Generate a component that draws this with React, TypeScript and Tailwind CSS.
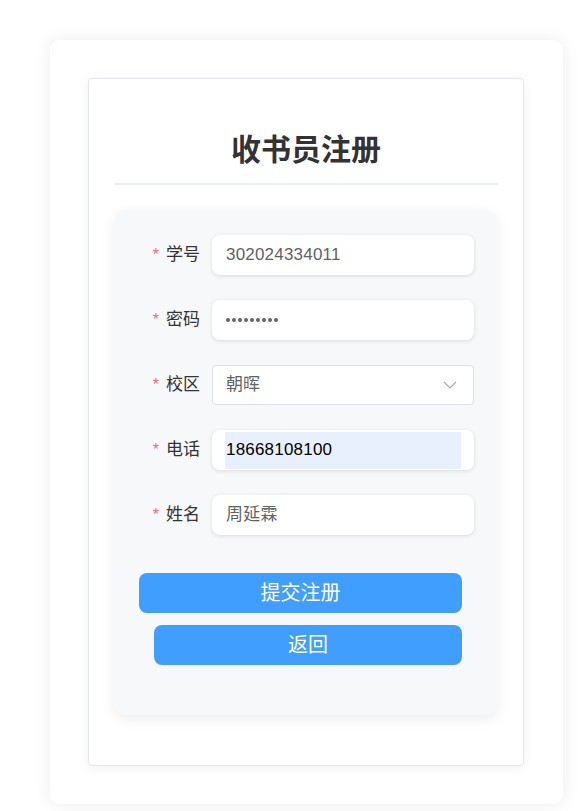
import React from "react";

const font = { fontFamily: '"Liberation Sans", "Noto Sans CJK SC", sans-serif' };

function Label({ text }: { text: string }) {
  return (
    <div className="w-[61px] shrink-0 flex items-center justify-end text-[17px] text-[#333333]">
      <span className="text-[#f56c6c] mr-[7px] text-[16px]">*</span>
      <span>{text}</span>
    </div>
  );
}

function Row({ label, children }: { label: string; children: React.ReactNode }) {
  return (
    <div className="flex items-center h-[40px] pl-[25px]">
      <Label text={label} />
      <div className="ml-[12px] w-[262px] h-[40px]">{children}</div>
    </div>
  );
}

function TextBox({ value, color = "#606266" }: { value: string; color?: string }) {
  return (
    <div className="w-full h-full bg-white rounded-[8px] shadow-[0_1px_4px_rgba(0,0,0,0.12)] flex items-center px-[14px] text-[17px] tracking-[0.2px]" style={{ color }}>
      {value}
    </div>
  );
}

export default function App() {
  const dots = [0, 1, 2, 3, 4, 5, 6, 7, 8];
  return (
    <div className="min-h-[811px] bg-white pt-[40px] pl-[50px]" style={font}>
      <div className="w-[513px] h-[764px] bg-white rounded-[10px] shadow-[0_0_18px_rgba(0,0,0,0.08)] pt-[38px] pl-[38px]">
        <div className="w-[436px] h-[688px] bg-white border border-[#e4e7ed] rounded-[4px] shadow-[0_2px_12px_rgba(0,0,0,0.06)] px-[25px] pt-[50px]">
          <h1 className="text-center text-[30px] leading-[42px] font-bold text-[#333333]">收书员注册</h1>
          <div className="mt-[12px] h-[2px] bg-[#ebeef5]" />
          <div className="mt-[25px] h-[505px] bg-[#f7f8fa] rounded-[12px] shadow-[0_4px_14px_rgba(0,0,0,0.07)] pt-[25px] flex flex-col">
            <div className="flex flex-col gap-[25px]">
              <Row label="学号">
                <TextBox value="302024334011" />
              </Row>
              <Row label="密码">
                <div className="w-full h-full bg-white rounded-[8px] shadow-[0_1px_4px_rgba(0,0,0,0.12)] flex items-center px-[14px] gap-[2px]">
                  {dots.map((d) => (
                    <span key={d} className="w-[4px] h-[4px] rounded-full bg-[#606266]" />
                  ))}
                </div>
              </Row>
              <Row label="校区">
                <div className="w-full h-full bg-white rounded-[4px] border border-[#dcdfe6] flex items-center justify-between pl-[13px] pr-[16px] text-[17px] text-[#606266]">
                  <span>朝晖</span>
                  <svg width="14" height="8" viewBox="0 0 14 8" fill="none">
                    <path d="M1 1L7 7L13 1" stroke="#a8abb2" strokeWidth="1.1" />
                  </svg>
                </div>
              </Row>
              <Row label="电话">
                <div className="w-full h-full bg-white rounded-[8px] shadow-[0_1px_4px_rgba(0,0,0,0.12)] flex items-center pl-[13px] pr-[13px]">
                  <div className="w-full h-[37px] bg-[#e8f0fe] flex items-center pl-[1px] text-[17px] tracking-[0.2px] text-black">18668108100</div>
                </div>
              </Row>
              <Row label="姓名">
                <TextBox value="周延霖" />
              </Row>
            </div>
            <div className="mt-[38px] flex flex-col">
              <button className="ml-[25px] w-[323px] h-[40px] rounded-[8px] bg-[#409eff] text-white text-[20px]">提交注册</button>
              <button className="mt-[12px] ml-[40px] w-[308px] h-[40px] rounded-[8px] bg-[#409eff] text-white text-[20px]">返回</button>
            </div>
          </div>
        </div>
      </div>
    </div>
  );
}
